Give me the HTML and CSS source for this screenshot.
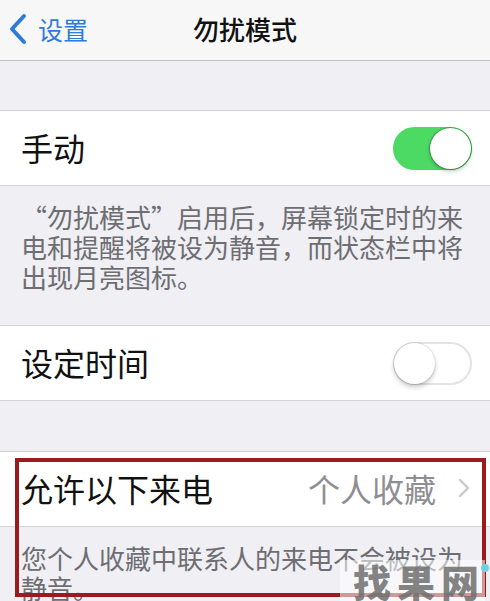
FILE: index.html
```html
<!DOCTYPE html>
<html lang="zh-CN">
<head>
    <meta charset="UTF-8">
    <title>勿扰模式</title>
    <link rel="stylesheet" href="styles.css">
</head>
<body>
    <div class="screen">
        <!-- 顶部导航 -->
        <nav class="navbar">
            <a class="back" href="#">
                <svg class="back-icon" width="20" height="32" viewBox="0 0 20 32">
                    <path d="M16 3 L4 16 L16 29" fill="none" stroke="#2f7bdc" stroke-width="4" stroke-linecap="round" stroke-linejoin="round"/>
                </svg>
                <span>设置</span>
            </a>
            <h1 class="nav-title">勿扰模式</h1>
        </nav>

        <div class="spacer"></div>

        <!-- 手动 -->
        <div class="cell">
            <span class="cell-label">手动</span>
            <div class="switch on"><div class="knob"></div></div>
        </div>
        <div class="footer footer-tall">
            <p>“勿扰模式”启用后，屏幕锁定时的来电和提醒将被设为静音，而状态栏中将出现月亮图标。</p>
        </div>

        <!-- 设定时间 -->
        <div class="cell">
            <span class="cell-label">设定时间</span>
            <div class="switch"><div class="knob"></div></div>
        </div>

        <div class="spacer spacer-b"></div>

        <!-- 允许以下来电 -->
        <div class="cell cell-c">
            <span class="cell-label">允许以下来电</span>
            <span class="cell-value">个人收藏</span>
            <svg class="chevron" width="12" height="20" viewBox="0 0 12 20">
                <path d="M2 2 L10 10 L2 18" fill="none" stroke="#c4c4c9" stroke-width="2.2" stroke-linecap="round" stroke-linejoin="round"/>
            </svg>
        </div>
        <div class="footer">
            <p>您个人收藏中联系人的来电不会被设为静音。</p>
        </div>

        <!-- 标注框和水印 -->
        <div class="mark-box"></div>
        <div class="watermark"><span>找果网</span><i class="dot"></i></div>
    </div>
</body>
</html>
```

FILE: styles.css
```css
* {
    box-sizing: border-box;
    margin: 0;
    padding: 0;
}

body {
    font-family: "Noto Sans CJK SC", "Noto Sans", sans-serif;
    background: #efeff4;
    color: #111;
    width: 490px;
    height: 601px;
    overflow: hidden;
}

.screen {
    position: relative;
    height: 601px;
    overflow: hidden;
}

/* 导航栏 */
.navbar {
    position: relative;
    height: 61px;
    background: #f7f7f8;
    border-bottom: 1px solid #bdbdc1;
    display: flex;
    align-items: center;
    justify-content: center;
}

.back {
    position: absolute;
    left: 8px;
    top: 13px;
    display: flex;
    align-items: center;
    gap: 10px;
    color: #2f7bdc;
    text-decoration: none;
    font-size: 25px;
    line-height: 32px;
}

.nav-title {
    font-size: 26px;
    font-weight: 500;
    line-height: 32px;
    margin-top: -2px;
    color: #111;
}

.spacer {
    height: 50px;
    border-bottom: 1px solid #cfcfd4;
}

.spacer-b {
    height: 51px;
}

/* 单元格 */
.cell {
    height: 75px;
    background: #fff;
    border-bottom: 1px solid #d4d4d8;
    display: flex;
    align-items: center;
    padding: 0 18px 0 21px;
}

.cell-label {
    flex: 1;
    font-size: 32px;
    line-height: 40px;
    margin-top: -2px;
}

.cell-value {
    font-size: 32px;
    line-height: 40px;
    color: #8e8e93;
    margin-right: 22px;
    margin-top: -2px;
}

.cell-c {
    padding-right: 20px;
}

.chevron {
    margin-top: -2px;
}

/* 开关 */
.switch {
    position: relative;
    width: 79px;
    height: 43px;
    border-radius: 22px;
    background: #fff;
    border: 2px solid #e3e3e6;
}

.switch .knob {
    position: absolute;
    top: -1px;
    left: -1px;
    width: 41px;
    height: 41px;
    border-radius: 50%;
    background: #fff;
    box-shadow: 0 3px 5px rgba(0, 0, 0, 0.22), 0 0 0 1px rgba(0, 0, 0, 0.08);
}

.switch.on {
    background: #4cd964;
    border-color: #4cd964;
}

.switch.on .knob {
    left: auto;
    right: -1px;
    box-shadow: 0 2px 4px rgba(0, 0, 0, 0.25), 0 0 0 1px rgba(40, 120, 50, 0.5);
}

/* 说明文字 */
.footer {
    padding: 16px 18px 0 21px;
    color: #6d6d72;
    font-size: 26px;
    line-height: 30px;
}

.footer-tall {
    height: 140px;
    border-bottom: 1px solid #d4d4d8;
}

/* 红色标注框 */
.mark-box {
    position: absolute;
    left: 15px;
    top: 458px;
    width: 471px;
    height: 139px;
    border: 4px solid #9a1a1d;
}

.watermark {
    position: absolute;
    left: 340px;
    top: 560px;
    width: 145px;
    height: 41px;
    background: rgba(255, 255, 255, 0.55);
}

.watermark span {
    position: absolute;
    left: 13px;
    top: -3px;
    white-space: nowrap;
    font-family: "Noto Sans CJK SC", serif;
    font-weight: 900;
    font-size: 38px;
    line-height: 48px;
    letter-spacing: 6px;
    color: rgba(110, 110, 110, 0.85);
}

.watermark .dot {
    position: absolute;
    right: -4px;
    top: 4px;
    width: 8px;
    height: 8px;
    border-radius: 50%;
    background: #6fd0e0;
}
```
